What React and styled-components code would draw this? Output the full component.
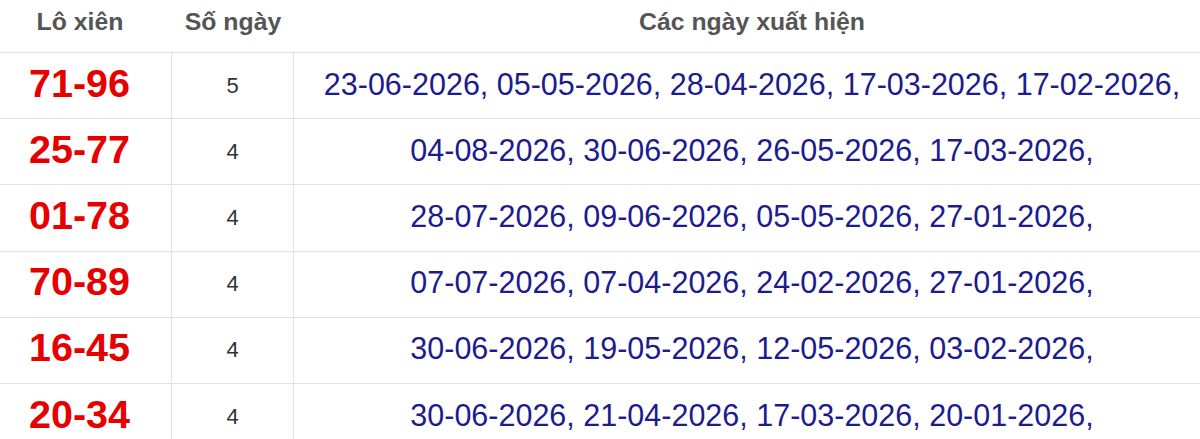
import React from 'react';
import styled, { createGlobalStyle } from 'styled-components';

const rows = [
  { pair: '71-96', count: 5, dates: ['23-06-2026', '05-05-2026', '28-04-2026', '17-03-2026', '17-02-2026'] },
  { pair: '25-77', count: 4, dates: ['04-08-2026', '30-06-2026', '26-05-2026', '17-03-2026'] },
  { pair: '01-78', count: 4, dates: ['28-07-2026', '09-06-2026', '05-05-2026', '27-01-2026'] },
  { pair: '70-89', count: 4, dates: ['07-07-2026', '07-04-2026', '24-02-2026', '27-01-2026'] },
  { pair: '16-45', count: 4, dates: ['30-06-2026', '19-05-2026', '12-05-2026', '03-02-2026'] },
  { pair: '20-34', count: 4, dates: ['30-06-2026', '21-04-2026', '17-03-2026', '20-01-2026'] }
];

const GlobalStyle = createGlobalStyle`
  html, body {
    margin: 0;
    padding: 0;
    background: #fff;
    overflow: hidden;
  }
  body {
    font-family: "Liberation Sans", Arial, sans-serif;
  }
`;

const Table = styled.div`
  display: grid;
  grid-template-columns: 184px 122px 1fr;
  width: calc(100% + 22px);
  margin-left: -12px;
`;

const HeadCell = styled.div`
  box-sizing: content-box;
  height: 42px;
  padding-top: 10px;
  border-bottom: 1px solid #e2e2e2;
  text-align: center;
  font-size: 24.8px;
  line-height: 24px;
  font-weight: bold;
  color: #555;
`;

const Cell = styled.div`
  box-sizing: content-box;
  height: 65.2px;
  border-bottom: 1px solid #e2e2e2;
  border-right: ${p => (p.$last ? 'none' : '1px solid #e2e2e2')};
  display: flex;
  align-items: center;
  justify-content: center;
`;

const Pair = styled.span`
  font-size: 39.5px;
  font-weight: bold;
  color: #e60000;
  padding-bottom: 5px;
`;

const Count = styled.span`
  font-size: 22px;
  color: #333;
`;

const Dates = styled.span`
  font-size: 30.5px;
  color: #1c1c8e;
  padding-bottom: 3px;
  white-space: nowrap;
`;

export default function App() {
  return (
    <>
      <GlobalStyle />
      <Table>
        <HeadCell>Lô xiên</HeadCell>
        <HeadCell>Số ngày</HeadCell>
        <HeadCell>Các ngày xuất hiện</HeadCell>
        {rows.map(row => (
          <React.Fragment key={row.pair}>
            <Cell>
              <Pair>{row.pair}</Pair>
            </Cell>
            <Cell>
              <Count>{row.count}</Count>
            </Cell>
            <Cell $last>
              <Dates>{row.dates.map(d => d + ',').join(' ')}</Dates>
            </Cell>
          </React.Fragment>
        ))}
      </Table>
    </>
  );
}
